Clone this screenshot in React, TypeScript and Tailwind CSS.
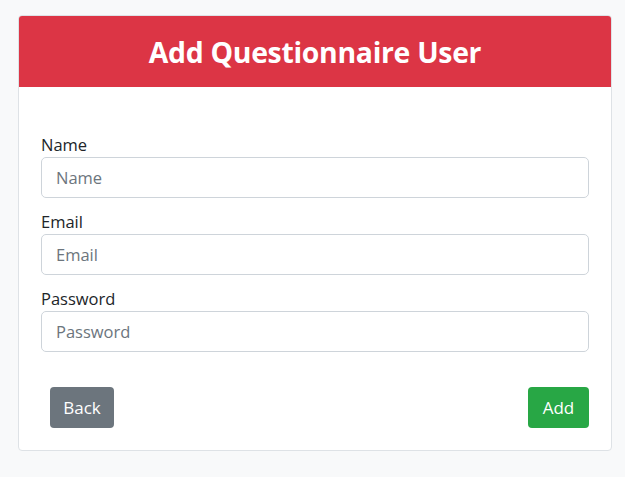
export default function App() {
  return (
    <div
      className="min-h-screen bg-[#f8f9fa] pt-[15px] pl-[18px]"
      style={{ fontFamily: '"Open Sans", "Noto Sans", sans-serif' }}
    >
      <div className="w-[594px] h-[436px] bg-white border border-[#dee2e6] rounded-[4px] overflow-hidden flex flex-col">
        {/* Header */}
        <div className="h-[71px] bg-[#dc3545] flex items-center justify-center">
          <h1 className="text-white font-bold text-[28.4px] leading-none tracking-[-0.3px] pt-[2px]">
            Add Questionnaire User
          </h1>
        </div>

        {/* Body */}
        <form className="pt-[46px] px-[22px] flex flex-col text-[#212529]">
          <label className="block h-6 leading-6 text-[16.5px]">Name</label>
          <input
            placeholder="Name"
            className="h-[41px] mb-[12px] w-full border border-[#ced4da] rounded-[5px] px-[14px] text-[16.5px] placeholder:text-[#6c757d] outline-none"
          />

          <label className="block h-6 leading-6 text-[16.5px]">Email</label>
          <input
            placeholder="Email"
            className="h-[41px] mb-[12px] w-full border border-[#ced4da] rounded-[5px] px-[14px] text-[16.5px] placeholder:text-[#6c757d] outline-none"
          />

          <label className="block h-6 leading-6 text-[16.5px]">Password</label>
          <input
            type="password"
            placeholder="Password"
            className="h-[41px] w-full border border-[#ced4da] rounded-[5px] px-[14px] text-[16.5px] placeholder:text-[#6c757d] outline-none"
          />

          <div className="mt-[35px] flex items-center justify-between pl-[9px]">
            <button
              type="button"
              className="h-[41px] w-[64px] rounded-[4px] bg-[#6c757d] text-white text-[17px]"
            >
              Back
            </button>
            <button
              type="button"
              className="h-[41px] w-[61px] rounded-[4px] bg-[#28a745] text-white text-[17px]"
            >
              Add
            </button>
          </div>
        </form>
      </div>
    </div>
  );
}
